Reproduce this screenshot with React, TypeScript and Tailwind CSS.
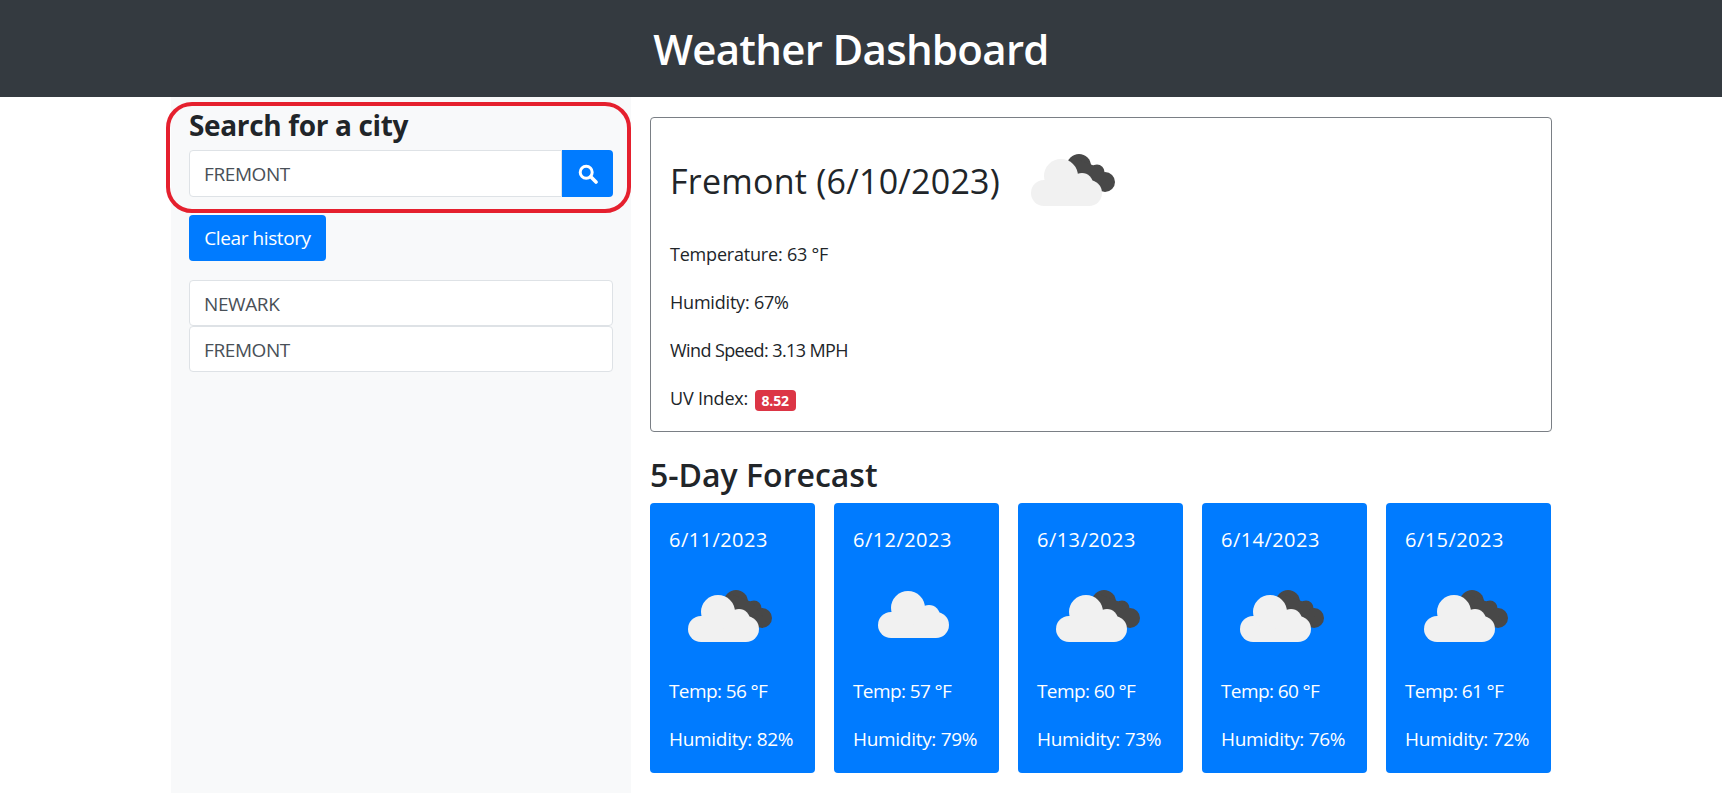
const forecast = [
  { date: "6/11/2023", temp: 56, humidity: 82, dark: true },
  { date: "6/12/2023", temp: 57, humidity: 79, dark: false },
  { date: "6/13/2023", temp: 60, humidity: 73, dark: true },
  { date: "6/14/2023", temp: 60, humidity: 76, dark: true },
  { date: "6/15/2023", temp: 61, humidity: 72, dark: true },
];

function CloudIcon({ dark, className }: { dark: boolean; className?: string }) {
  return (
    <svg viewBox="0 0 100 80" className={className}>
      {dark && (
        <g fill="#484848">
          <circle cx="56" cy="22" r="12" />
          <circle cx="74" cy="28" r="7.5" />
          <circle cx="82" cy="38" r="10" />
          <path d="M48 13 L72 22 L88 44 L76 48 L50 30 Z" />
        </g>
      )}
      <g fill="#f1f1f1" transform={dark ? undefined : "translate(6 -4)"}>
        <rect x="8" y="36" width="71" height="26" rx="13" />
        <circle cx="38" cy="32" r="17" />
        <circle cx="59" cy="40" r="11" />
      </g>
    </svg>
  );
}

export default function App() {
  return (
    <div className="min-h-[808px] bg-white font-['Open_Sans','Noto_Sans',sans-serif] text-[#212529]">
      <header className="h-[97px] bg-[#343a40] flex items-center justify-center pr-[20px]">
        <h1 className="text-[42px] font-semibold text-white tracking-[-0.7px]">Weather Dashboard</h1>
      </header>

      <div className="flex ml-[171px]">
        {/* Sidebar */}
        <aside className="relative w-[460px] h-[696px] bg-[#f8f9fa] px-[18px] pt-[13px]">
          <div className="absolute left-[-5px] top-[5px] w-[465px] h-[111px] rounded-[26px] border-[4px] border-[#e5202e]" />
          <h2 className="text-[28px] leading-[30px] font-bold tracking-[-0.35px]">Search for a city</h2>
          <div className="flex h-[47px] mt-[10px]">
            <div className="flex-1 flex items-center bg-white border border-[#dee2e6] rounded-l px-[14px] pt-[2px] text-[19px] tracking-[-0.4px] text-[#495057]">
              FREMONT
            </div>
            <button className="w-[51px] bg-[#007bff] rounded-r flex items-center justify-center text-white">
              <svg viewBox="0 0 20 20" className="w-[20px] h-[20px]" fill="none" stroke="currentColor">
                <circle cx="8.2" cy="8.2" r="6" strokeWidth="3" />
                <path d="M12.8 12.8 L18 18" strokeWidth="3.6" strokeLinecap="round" />
              </svg>
            </button>
          </div>
          <button className="mt-[18px] h-[46px] w-[137px] bg-[#007bff] rounded text-white text-[19px] tracking-[-0.4px]">
            Clear history
          </button>
          <ul className="mt-[19px]">
            <li className="h-[46px] flex items-center bg-white border border-[#dee2e6] rounded px-[14px] pt-[2px] text-[19px] tracking-[-0.4px] text-[#495057]">
              NEWARK
            </li>
            <li className="h-[46px] flex items-center bg-white border border-[#dee2e6] rounded px-[14px] pt-[2px] text-[19px] tracking-[-0.4px] text-[#495057]">
              FREMONT
            </li>
          </ul>
        </aside>

        {/* Main */}
        <main className="ml-[19px] w-[902px] pt-[20px]">
          <section className="h-[315px] border border-[#7a7f85] rounded px-[19px] pt-[33px]">
            <div className="flex items-start">
              <h3 className="text-[34px] leading-[50px] mt-[5px] tracking-[0.25px]">Fremont (6/10/2023)</h3>
              <CloudIcon dark className="w-[100px] h-[80px] ml-[23px] -mt-[7px]" />
            </div>
            <p className="text-[18px] leading-[24px] mt-[18px] tracking-[-0.2px]">Temperature: 63 °F</p>
            <p className="text-[18px] leading-[24px] mt-[24px] tracking-[-0.2px]">Humidity: 67%</p>
            <p className="text-[18px] leading-[24px] mt-[24px] tracking-[-0.6px]">Wind Speed: 3.13 MPH</p>
            <p className="text-[18px] leading-[24px] mt-[24px] tracking-[-0.2px]">
              UV Index:{" "}
              <span className="inline-block ml-[2px] bg-[#dc3545] text-white text-[14px] leading-[21px] font-bold px-[7px] rounded relative top-[1px]">8.52</span>
            </p>
          </section>

          <h2 className="mt-[23px] text-[32px] leading-[40px] font-semibold">5-Day Forecast</h2>
          <div className="flex gap-[19px] mt-[8px]">
            {forecast.map((day) => (
              <div key={day.date} className="w-[165px] h-[270px] bg-[#007bff] rounded text-white px-[19px] pt-[25px]">
                <p className="text-[20px] leading-[24px] tracking-[0.45px]">{day.date}</p>
                <CloudIcon dark={day.dark} className="w-[100px] h-[80px] ml-[11px] mt-[28px]" />
                <p className="text-[19px] leading-[24px] mt-[19px] tracking-[-0.6px]">Temp: {day.temp} °F</p>
                <p className="text-[19px] leading-[24px] mt-[24px] tracking-[-0.3px]">Humidity: {day.humidity}%</p>
              </div>
            ))}
          </div>
        </main>
      </div>
    </div>
  );
}
